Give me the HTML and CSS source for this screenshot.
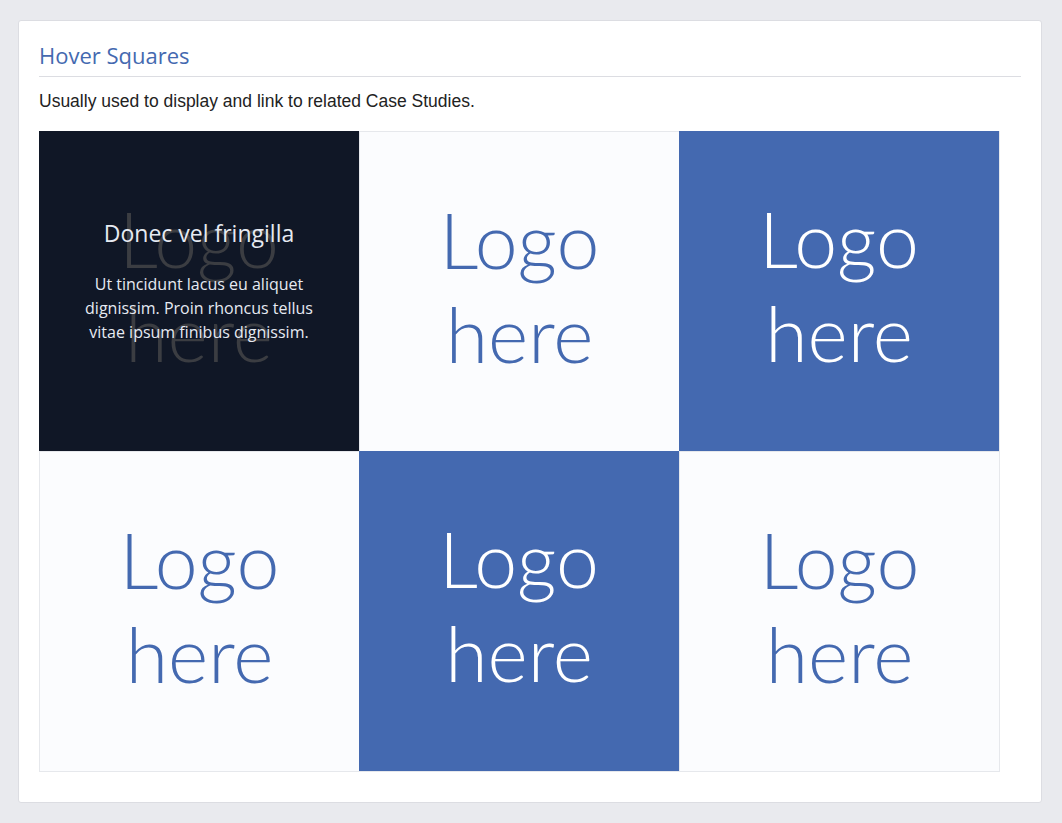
FILE: index.html
```html
<!DOCTYPE html>
<html lang="en">
<head>
    <meta charset="UTF-8">
    <meta name="viewport" content="width=device-width, initial-scale=1.0">
    <title>Hover Squares</title>
    <link rel="stylesheet" href="styles.css">
</head>
<body>
    <div class="card">
        <h2 class="card-title">Hover Squares</h2>
        <p class="card-lead">Usually used to display and link to related Case Studies.</p>

        <div class="squares">
            <a class="square dark" href="#">
                <span class="logo">Logo<br>here</span>
                <div class="square-info">
                    <h3>Donec vel fringilla</h3>
                    <p>Ut tincidunt lacus eu aliquet dignissim. Proin rhoncus tellus vitae ipsum finibus dignissim.</p>
                </div>
            </a>
            <a class="square light" href="#"><span class="logo">Logo<br>here</span></a>
            <a class="square blue" href="#"><span class="logo">Logo<br>here</span></a>
            <a class="square light" href="#"><span class="logo">Logo<br>here</span></a>
            <a class="square blue" href="#"><span class="logo">Logo<br>here</span></a>
            <a class="square light" href="#"><span class="logo">Logo<br>here</span></a>
        </div>
    </div>
</body>
</html>
```

FILE: styles.css
```css
body {
    margin: 0;
    padding: 20px 20px 19px 18px;
    background-color: #e9eaee;
    font-family: "Liberation Sans", Arial, sans-serif;
    color: #222;
}
.card {
    background-color: #fff;
    border: 1px solid #dcdde2;
    border-radius: 3px;
    padding: 20px 20px 30px 20px;
    min-height: 731px;
}
.card-title {
    margin: 0;
    padding-bottom: 7px;
    border-bottom: 1px solid #dcdde2;
    font-family: "Open Sans", sans-serif;
    font-weight: 400;
    font-size: 22px;
    line-height: 28px;
    color: #4469b0;
}
.card-lead {
    margin: 12px 0 18px 0;
    font-size: 17.5px;
    line-height: 24px;
    color: #222;
}
.squares {
    display: grid;
    grid-template-columns: repeat(3, 320px);
    grid-auto-rows: 320px;
    width: 960px;
    border: 1px solid #e6e8ec;
    border-top: none;
    border-left: none;
}
.square {
    position: relative;
    display: flex;
    align-items: center;
    justify-content: center;
    text-decoration: none;
    text-align: center;
    overflow: hidden;
}
.logo {
    font-family: Lato, "Open Sans", sans-serif;
    font-weight: 300;
    font-size: 77px;
    line-height: 94px;
    margin-bottom: 12px;
}
.light {
    background-color: #fbfcfe;
    border-left: 1px solid #e6e8ec;
    border-top: 1px solid #e6e8ec;
}
.light .logo {
    color: #4469b0;
}
.blue {
    background-color: #4469b0;
}
.blue .logo {
    color: #fff;
}
.dark {
    background-color: #101726;
}
.dark .logo {
    color: #3b3d42;
}
.square-info {
    position: absolute;
    inset: 0;
    display: flex;
    flex-direction: column;
    justify-content: center;
    padding: 0 36px 19px 36px;
    color: #e6eaf2;
}
.square-info h3 {
    margin: 0 0 25px 0;
    font-family: "Open Sans", sans-serif;
    font-weight: 400;
    font-size: 23px;
    line-height: 28px;
}
.square-info p {
    margin: 0;
    font-family: "Open Sans", sans-serif;
    font-size: 16px;
    line-height: 24px;
}
```
